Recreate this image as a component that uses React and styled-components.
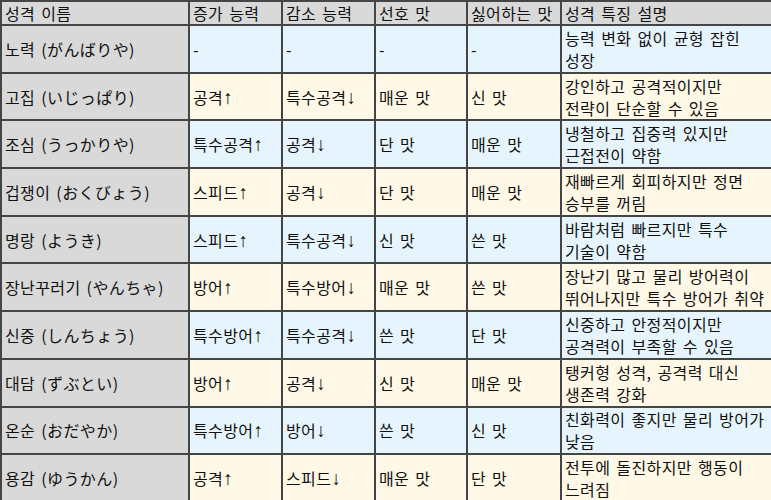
import styled, { createGlobalStyle } from "styled-components";

const GlobalStyle = createGlobalStyle`
  html, body {
    margin: 0;
    padding: 0;
    background: #ffffff;
  }
  body {
    font-family: "Noto Sans CJK KR", "Noto Sans CJK JP", "Noto Sans", sans-serif;
    color: #111;
  }
`;

const Table = styled.table`
  border-collapse: collapse;
  table-layout: fixed;
  width: 771px;
  font-size: 16px;
  line-height: 22px;
  letter-spacing: 0.4px;
  word-spacing: 2px;
`;

const HeadCell = styled.th`
  background: #d9d9d9;
  border: 2px solid #454545;
  font-weight: 400;
  text-align: left;
  padding: 0 3px;
  height: 21px;
  white-space: nowrap;
  vertical-align: middle;
`;

const Row = styled.tr`
  height: 47.7px;
  background: ${(p) => (p.$alt ? "#fff8e6" : "#e6f5fd")};
`;

const NameCell = styled.td`
  background: #d9d9d9;
  border: 2px solid #454545;
  padding: 0 3px;
  white-space: nowrap;
  vertical-align: middle;
`;

const Cell = styled.td`
  border: 2px solid #454545;
  padding: 0 3px;
  white-space: nowrap;
  vertical-align: middle;
`;

const Line = styled.div`
  white-space: nowrap;
`;

// narrow arrow like the original's hangul font
const Arrow = styled.span`
  font-family: "Liberation Sans", sans-serif;
  font-size: 19px;
  line-height: 0;
  letter-spacing: 0;
`;

const columns = [
  { label: "성격 이름", width: 188 },
  { label: "증가 능력", width: 93 },
  { label: "감소 능력", width: 93 },
  { label: "선호 맛", width: 92 },
  { label: "싫어하는 맛", width: 94 },
  { label: "성격 특징 설명", width: 211 },
];

const natures = [
  ["노력 (がんばりや)", "-", "-", "-", "-", ["능력 변화 없이 균형 잡힌", "성장"]],
  ["고집 (いじっぱり)", "공격↑", "특수공격↓", "매운 맛", "신 맛", ["강인하고 공격적이지만", "전략이 단순할 수 있음"]],
  ["조심 (うっかりや)", "특수공격↑", "공격↓", "단 맛", "매운 맛", ["냉철하고 집중력 있지만", "근접전이 약함"]],
  ["겁쟁이 (おくびょう)", "스피드↑", "공격↓", "단 맛", "매운 맛", ["재빠르게 회피하지만 정면", "승부를 꺼림"]],
  ["명랑 (ようき)", "스피드↑", "특수공격↓", "신 맛", "쓴 맛", ["바람처럼 빠르지만 특수", "기술이 약함"]],
  ["장난꾸러기 (やんちゃ)", "방어↑", "특수방어↓", "매운 맛", "쓴 맛", ["장난기 많고 물리 방어력이", "뛰어나지만 특수 방어가 취약"]],
  ["신중 (しんちょう)", "특수방어↑", "특수공격↓", "쓴 맛", "단 맛", ["신중하고 안정적이지만", "공격력이 부족할 수 있음"]],
  ["대담 (ずぶとい)", "방어↑", "공격↓", "신 맛", "매운 맛", ["탱커형 성격, 공격력 대신", "생존력 강화"]],
  ["온순 (おだやか)", "특수방어↑", "방어↓", "쓴 맛", "신 맛", ["친화력이 좋지만 물리 방어가", "낮음"]],
  ["용감 (ゆうかん)", "공격↑", "스피드↓", "매운 맛", "단 맛", ["전투에 돌진하지만 행동이", "느려짐"]],
];

// split a stat like "공격↑" so the arrow can use its own font
function Stat({ text }) {
  const last = text.slice(-1);
  if (last === "↑" || last === "↓") {
    return (
      <>
        {text.slice(0, -1)}
        <Arrow>{last}</Arrow>
      </>
    );
  }
  return text;
}

export default function App() {
  return (
    <>
      <GlobalStyle />
      <Table>
        <colgroup>
          {columns.map((c) => (
            <col key={c.label} style={{ width: c.width }} />
          ))}
        </colgroup>
        <thead>
          <tr>
            {columns.map((c) => (
              <HeadCell key={c.label}>{c.label}</HeadCell>
            ))}
          </tr>
        </thead>
        <tbody>
          {natures.map(([name, up, down, like, dislike, desc], i) => (
            <Row key={name} $alt={i % 2 === 1}>
              <NameCell>{name}</NameCell>
              <Cell><Stat text={up} /></Cell>
              <Cell><Stat text={down} /></Cell>
              <Cell>{like}</Cell>
              <Cell>{dislike}</Cell>
              <Cell>
                {desc.map((line) => (
                  <Line key={line}>{line}</Line>
                ))}
              </Cell>
            </Row>
          ))}
        </tbody>
      </Table>
    </>
  );
}
